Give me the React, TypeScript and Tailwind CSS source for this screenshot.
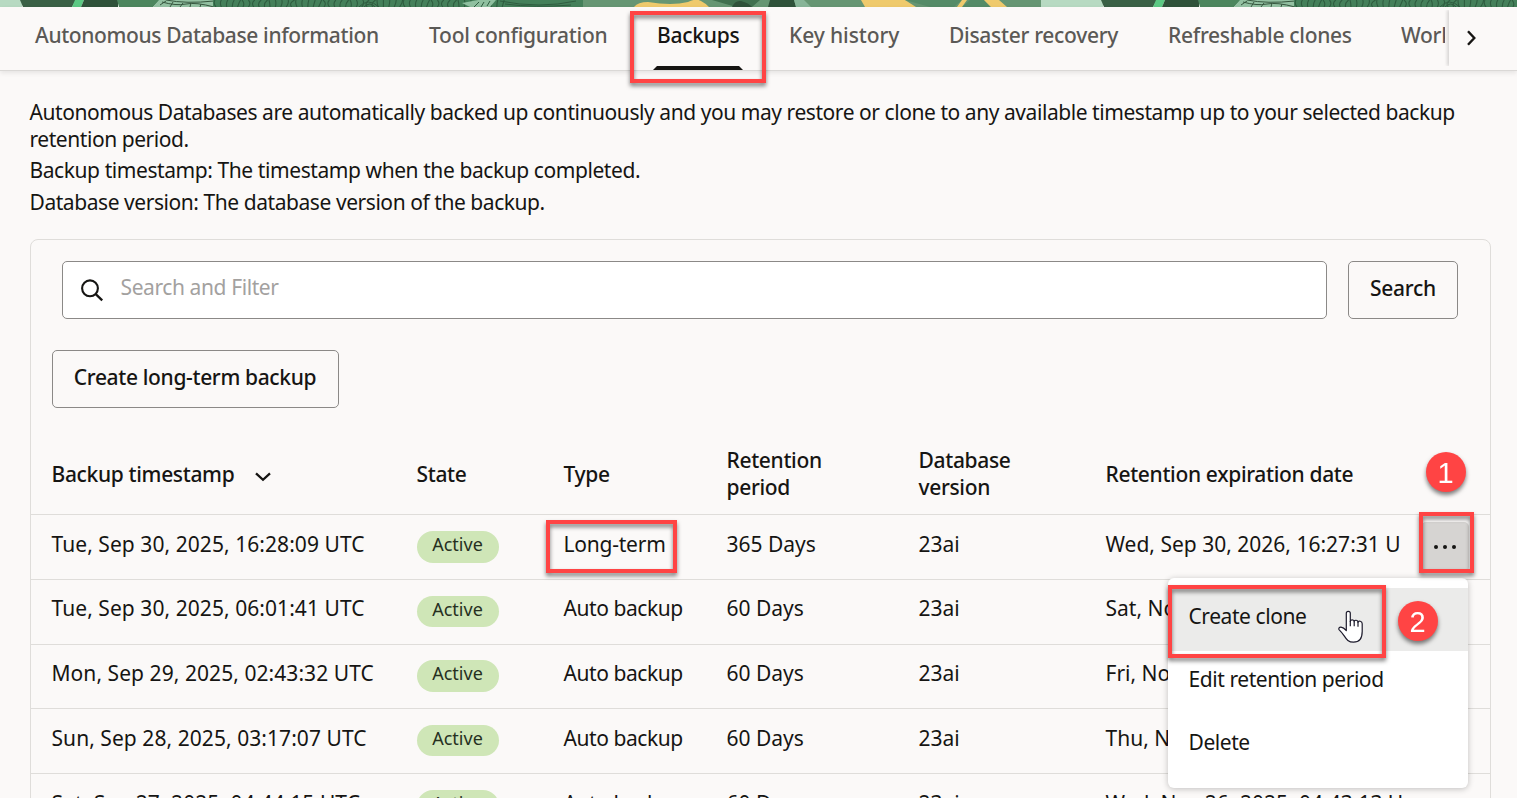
import React from "react";

const tabs = [
  { label: "Autonomous Database information", cls: "w-[394px] tracking-[-0.37px]" },
  { label: "Tool configuration", cls: "w-[228px] tracking-[-0.25px]" },
  { label: "Backups", cls: "w-[132px] tracking-[-0.24px] text-[#161513]" },
  { label: "Key history", cls: "w-[160px] tracking-[-0.1px]" },
  { label: "Disaster recovery", cls: "w-[219px] tracking-[-0.3px]" },
  { label: "Refreshable clones", cls: "w-[233px] tracking-[-0.3px]" },
  { label: "Workload", cls: "w-[43.5px] overflow-hidden tracking-[-0.3px]" },
];

const rows = [
  { ts: "Tue, Sep 30, 2025, 16:28:09 UTC", type: "Long-term", typeCls: "tracking-[-0.22px]", ret: "365 Days", exp: "Wed, Sep 30, 2026, 16:27:31 U", h: "h-[65px]", pt: "pt-4", badge: "mt-0 h-8" },
  { ts: "Tue, Sep 30, 2025, 06:01:41 UTC", type: "Auto backup", typeCls: "tracking-[-0.43px]", ret: "60 Days", exp: "Sat, Nov 29, 2025, 06:00:41 U", h: "h-[65px]", pt: "pt-[15px]", badge: "mt-px h-[31px]" },
  { ts: "Mon, Sep 29, 2025, 02:43:32 UTC", type: "Auto backup", typeCls: "tracking-[-0.43px]", ret: "60 Days", exp: "Fri, Nov 28, 2025, 02:42:32 U", h: "h-[64px]", pt: "pt-[15px]", badge: "mt-0 h-8" },
  { ts: "Sun, Sep 28, 2025, 03:17:07 UTC", type: "Auto backup", typeCls: "tracking-[-0.43px]", ret: "60 Days", exp: "Thu, Nov 27, 2025, 03:16:07 U", h: "h-[65px]", pt: "pt-4", badge: "mt-0 h-[31px]" },
  { ts: "Sat, Sep 27, 2025, 04:44:15 UTC", type: "Auto backup", typeCls: "tracking-[-0.43px]", ret: "60 Days", exp: "Wed, Nov 26, 2025, 04:43:13 U", h: "h-[65px]", pt: "pt-4", badge: "mt-0 h-8" },
];

const cols = "grid grid-cols-[365px_147px_163px_192px_187px_1fr] pl-[20.5px]";

function BannerTile({ x }: { x: number }) {
  const lines = Array.from({ length: 54 }, (_, i) => 216 + i * 5.4);
  return (
    <g transform={`translate(${x} 0)`}>
      <rect x="-40" width="62" height="7" fill="#b7dac2" />
      <path d="M20 0H76L72 7H23Z" fill="#3a6146" />
      <path d="M75 0H84L81 7H72Z" fill="#5bc983" />
      <path d="M84 0H118V7H81Z" fill="#2f523a" />
      <path d="M117 0H160L153 7H119Z" fill="#4c865e" />
      <path d="M159 0H214V7H153Z" fill="#93c1a2" />
      <path d="M162 2q14 4 24 2t28 3M166 0q20 4 48 1M160 5l6-4M170 7l3-5M180 7l3-4M190 7l1-4M200 7l1-3" stroke="#36573f" fill="none" />
      <path d="M213 0H584V7H213Z" fill="#44805a" />
      {lines.map((l, i) => (
        <path key={l} d={`M${l} 7q${(i % 7) - 3} -4 ${(i % 5) - 1} -7`} stroke="#2f5d40" strokeWidth="1.1" fill="none" />
      ))}
      <path d="M359 7q9-10 20 0M364 7q6-6 11 0" stroke="#2f5d40" fill="none" />
      <path d="M462 3L478 0H496L490 7H470Z" fill="#8fc0a0" />
      <path d="M474 7l5-5M481 7l3-5M487 6l3-5M500 1q40 8 76 0M505 4q30 4 66 1" stroke="#2f5d40" fill="none" />
      <path d="M583 0H1046L1042 7H583Z" fill="#669673" />
      <path d="M634 7q4-5 14-5 24 4 40 0 8-4 13-1 4 2 8 6Z" fill="#efca6c" />
      <path d="M712 0H760L752 7H736Z" fill="#40704f" />
      <path d="M732 7q3-7 9-6 8 2 11 6Z" fill="#2f523a" />
      <path d="M770 0H794L796 7H768Z" fill="#2f523a" />
      <path d="M794 0H804L811 7H796Z" fill="#87b598" />
      <path d="M861 0H905L916 7H865Z" fill="#efca6c" />
      <path d="M905 0H962L954 7H930Z M970 0H984L990 7H962Z" fill="#548b67" />
      <path d="M962 0H967L962 7H957Z M984 0H999L1007 7H991Z" fill="#efca6c" />
    </g>
  );
}

function Callout({ className }: { className: string }) {
  return <div className={"pointer-events-none absolute border-4 border-[#ff4444] drop-shadow-[0_3px_2px_rgba(0,0,0,0.5)] " + className} />;
}

function Marker({ n, className }: { n: number; className: string }) {
  return (
    <div className={"absolute flex size-10 items-center justify-center rounded-full bg-[#ff4444] pr-px pt-[2px] font-['Liberation_Sans',sans-serif] text-[29px] leading-none text-white drop-shadow-[0_3px_2px_rgba(0,0,0,0.5)] " + className}>
      {n}
    </div>
  );
}

export default function App() {
  return (
    <div className="relative h-[798px] w-[1517px] overflow-hidden bg-[#fbf9f8] font-['Noto_Sans',sans-serif] text-[21px] leading-[27px] text-[#161513]">
      <svg className="block" width="1517" height="7" viewBox="0 0 1517 7">
        <BannerTile x={0} />
        <BannerTile x={1081} />
      </svg>
      <nav className="relative flex h-[64px] whitespace-nowrap border-b border-[#dad8d6] pl-[35px] pt-[15px] font-medium text-[#5b5956] shadow-[0_2px_5px_rgba(0,0,0,0.09)]">
        {tabs.map((t) => (
          <div key={t.label} className={t.cls}>{t.label}</div>
        ))}
        <svg className="absolute left-[653px] top-[59px]" width="90" height="4" viewBox="0 0 90 4">
          <path d="M0 4L4 0H86L90 4Z" fill="#161513" />
        </svg>
        <div className="absolute right-0 top-[3px] flex h-[56px] w-[68px] items-center bg-[#fbf9f8] pl-[17px] shadow-[-2px_0_3px_rgba(0,0,0,0.14)] [clip-path:inset(0_0_0_-6px)]">
          <svg width="12" height="16" viewBox="0 0 12 16">
            <path d="M2 1.2L8.3 8L2 14.8" fill="none" stroke="#161513" strokeWidth="2.4" />
          </svg>
        </div>
      </nav>

      <section className="px-[29.5px] pt-[28px] tracking-[-0.44px]">
        <p className="whitespace-nowrap">
          Autonomous Databases are automatically backed up continuously and you may restore or clone to any available timestamp up to your selected backup
          <br />
          retention period.
        </p>
        <p className="mt-1 tracking-[-0.42px]">Backup timestamp: The timestamp when the backup completed.</p>
        <p className="mt-[5px]">Database version: The database version of the backup.</p>
      </section>

      <div className="ml-[30px] mt-[23px] w-[1461px] rounded-lg border border-[#dfddda] pt-[21px]">
        <div className="flex gap-[21px] pl-[31px]">
          <div className="flex h-[58px] w-[1265px] rounded-[5px] border border-[#8b8987] bg-white pl-[17px] pt-[12px]">
            <svg width="24" height="24" viewBox="0 0 24 24" className="mt-[3.5px]">
              <circle cx="10" cy="10.3" r="7.9" fill="none" stroke="#161513" strokeWidth="2.1" />
              <path d="M15.5 15.8L22.2 22.3" stroke="#161513" strokeWidth="2.3" />
            </svg>
            <span className="ml-[16.5px] tracking-[-0.4px] text-[#a3a19f]">Search and Filter</span>
          </div>
          <button className="h-[58px] w-[110px] rounded-[5px] border border-[#8b8987] pb-[4px] text-center font-medium tracking-[-0.25px]">Search</button>
        </div>
        <button className="ml-[21px] mt-[31px] block h-[58px] w-[287px] rounded-[5px] border border-[#8b8987] pb-[3px] pr-px text-center font-medium tracking-[-0.35px]">
          Create long-term backup
        </button>
        <div className={cols + " mt-[24px] h-[83px] items-center border-b border-[#dfddda] pt-[2px] font-medium tracking-[-0.34px]"}>
          <div className="flex items-center">
            Backup timestamp
            <svg width="16" height="10" viewBox="0 0 16 10" className="ml-[21px] mt-[5px]">
              <path d="M1 1.3L8 7.8L15 1.3" fill="none" stroke="#161513" strokeWidth="2.3" />
            </svg>
          </div>
          <div>State</div>
          <div>Type</div>
          <div>Retention<br />period</div>
          <div>Database<br />version</div>
          <div>Retention expiration date</div>
        </div>
        {rows.map((r) => (
          <div key={r.ts} className={cols + " items-start whitespace-nowrap border-b border-[#dfddda] " + r.h + " " + r.pt}>
            <div className="tracking-[0.06px]">{r.ts}</div>
            <div className={"w-[82px] rounded-full bg-[#cfe6b7] pt-px text-center text-[18px] leading-[24px] text-[#26301f] " + r.badge}>Active</div>
            <div className={r.typeCls}>{r.type}</div>
            <div>{r.ret}</div>
            <div>23ai</div>
            <div>{r.exp}</div>
          </div>
        ))}
      </div>

      <button className="absolute left-[1421px] top-[522px] flex h-[50px] w-[48px] items-center justify-center gap-[4.5px] rounded-[5px] bg-[#d6d4d2]">
        <span className="size-[4.6px] rounded-full bg-[#161513]" />
        <span className="size-[4.6px] rounded-full bg-[#161513]" />
        <span className="size-[4.6px] rounded-full bg-[#161513]" />
      </button>

      <div className="absolute left-[1168px] top-[578px] h-[210px] w-[300px] rounded-md bg-white pt-[10px] tracking-[-0.43px] shadow-[0_1px_6px_rgba(0,0,0,0.24)]">
        <div className="h-[63px] bg-[#ebebea] pl-[20.5px] pt-[15px]">Create clone</div>
        <div className="h-[63px] pl-[20.5px] pt-[15px]">Edit retention period</div>
        <div className="h-[63px] pl-[20.5px] pt-[15px]">Delete</div>
      </div>

      <svg className="absolute left-[1337px] top-[609px]" width="28" height="36" viewBox="0 0 28 36">
        <path
          d="M9.3 21.5V4.3C9.3 1.6 13.3 1.6 13.3 4.3V12.5C13.3 10.2 17.2 10.2 17.2 12.7C17.4 10.6 21 10.8 21 13.3C21.4 11.4 25.2 11.8 25.2 14.8V22.5C25.2 29.5 22 33.2 16.5 33.2C11.5 33.2 9.6 30.6 7.2 26.9C5.6 24.4 4 22.6 2 20.6C1.4 19.6 2.2 18 4 18.2C6.3 18.5 7.8 19.9 9.3 21.5Z"
          fill="#fff" stroke="#1d1b2c" strokeWidth="1.2" strokeLinejoin="round"
        />
        <path d="M13.3 12V17.3M17.2 12.5V17.3M21 13V17.8" stroke="#1d1b2c" strokeWidth="1.2" />
      </svg>

      <Callout className="left-[630px] top-[11px] h-[72px] w-[136px]" />
      <Callout className="left-[546px] top-[520px] h-[53px] w-[131px]" />
      <Callout className="left-[1419px] top-[512px] h-[61px] w-[55px]" />
      <Callout className="left-[1168px] top-[585px] h-[73px] w-[218px]" />
      <Marker n={1} className="left-[1426px] top-[452px]" />
      <Marker n={2} className="left-[1398px] top-[601px]" />
    </div>
  );
}
